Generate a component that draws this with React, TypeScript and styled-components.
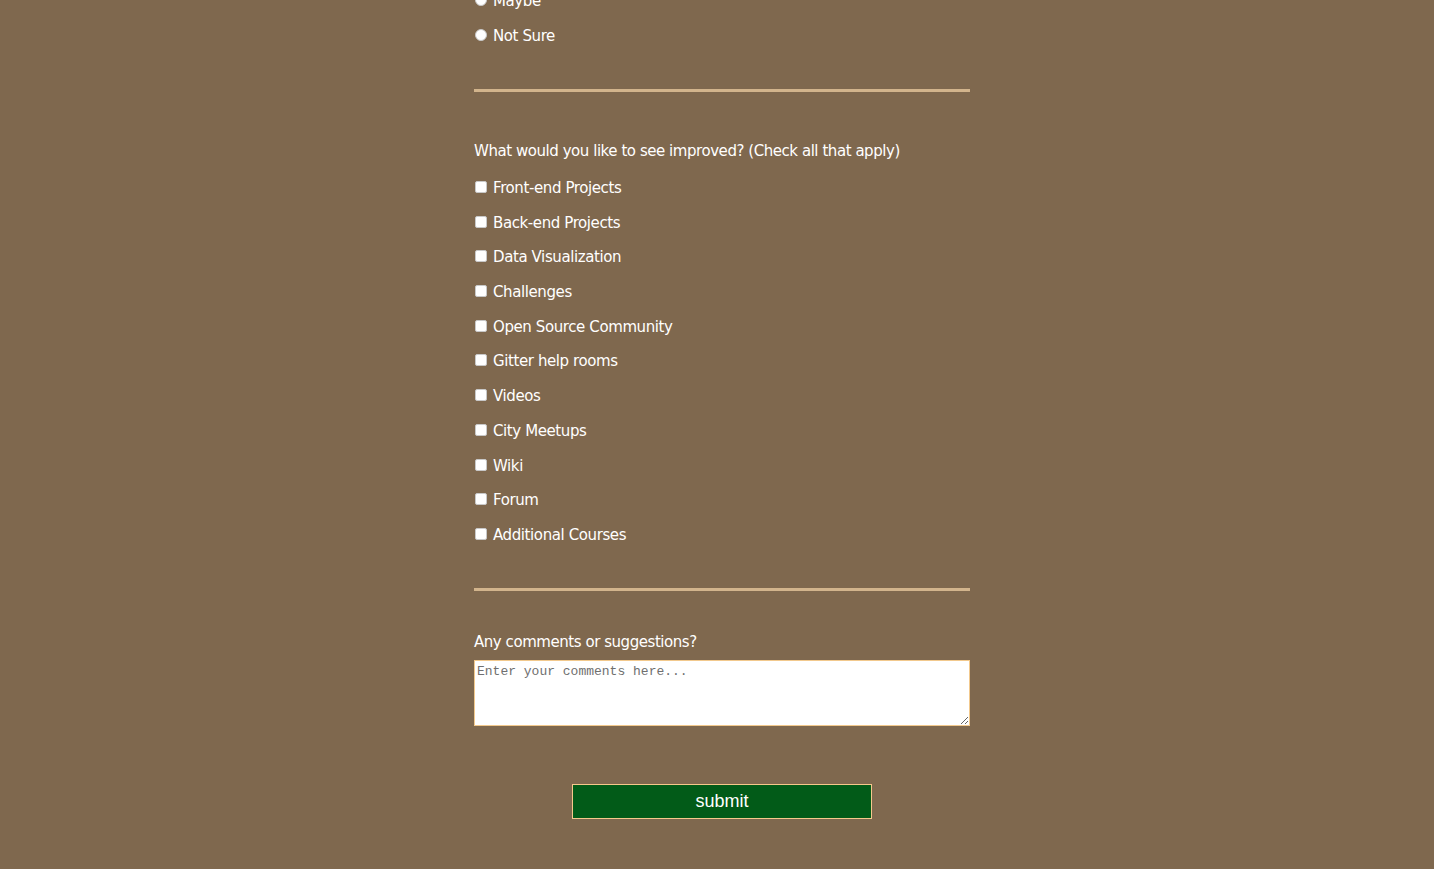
import React from "react";
import styled, { createGlobalStyle } from "styled-components";

const Global = createGlobalStyle`
  html, body { margin: 0; padding: 0; background: #7f684e; }
  body { font-family: Tahoma, "DejaVu Sans", Verdana, sans-serif; overflow: hidden; }
`;

const Page = styled.div`
  width: 506px;
  margin: -17.35px auto 0;
  padding-left: 10px;
  box-sizing: border-box;
  color: #ffffff;
  font-size: 15px;
`;

const Group = styled.div<{ $top?: number }>`
  display: flex;
  flex-direction: column;
  margin-top: ${(p) => p.$top ?? 0}px;
`;

const Option = styled.label`
  display: flex;
  align-items: center;
  height: 34.7px;
  gap: 6px;
  letter-spacing: -0.4px;
`;

const OptionText = styled.span`
  padding-top: 2px;
`;

const Radio = styled.input.attrs({ type: "radio" })`
  appearance: none;
  margin: 0 0 0 1px;
  width: 12px;
  height: 12px;
  border-radius: 50%;
  background: #fff;
  border: 1px solid #c8c8c8;
  box-sizing: border-box;
`;

const Check = styled.input.attrs({ type: "checkbox" })`
  appearance: none;
  margin: 0 0 0 1px;
  width: 12px;
  height: 12px;
  border-radius: 2px;
  background: #fff;
  border: 1px solid #c8c8c8;
  box-sizing: border-box;
`;

const Divider = styled.hr<{ $top: number }>`
  margin: ${(p) => p.$top}px 0 0;
  border: 0;
  height: 3px;
  background: #d2b48c;
`;

const Question = styled.div<{ $top: number }>`
  margin-top: ${(p) => p.$top}px;
  line-height: 20px;
  padding-top: 1px;
  letter-spacing: -0.45px;
`;

const Comments = styled.textarea`
  display: block;
  margin-top: 8px;
  width: 496px;
  height: 66px;
  box-sizing: border-box;
  border: 1px solid #f2c98d;
  background: #fff;
  padding: 3px 2px;
  font-family: "Liberation Mono", "Courier New", monospace;
  font-size: 13px;
  resize: vertical;
  outline: none;
  &::placeholder { color: #6f6f6f; }
`;

const Submit = styled.button`
  display: block;
  margin: 58px auto 0;
  width: 300px;
  height: 35px;
  background: #025b18;
  border: 1px solid #f5c98c;
  color: #fff;
  font-family: "Liberation Sans", Arial, sans-serif;
  font-size: 18px;
  padding: 0;
`;

const improvements = [
  "Front-end Projects",
  "Back-end Projects",
  "Data Visualization",
  "Challenges",
  "Open Source Community",
  "Gitter help rooms",
  "Videos",
  "City Meetups",
  "Wiki",
  "Forum",
  "Additional Courses",
];

export default function App() {
  return (
    <>
      <Global />
      <Page>
        <Group>
          <Option><Radio name="rec" /><OptionText>Maybe</OptionText></Option>
          <Option><Radio name="rec" /><OptionText>Not Sure</OptionText></Option>
        </Group>
        <Divider $top={37} />
        <Question $top={48}>What would you like to see improved? (Check all that apply)</Question>
        <Group $top={8.65}>
          {improvements.map((t) => (
            <Option key={t}><Check /><OptionText>{t}</OptionText></Option>
          ))}
        </Group>
        <Divider $top={36.65} />
        <Question $top={40}>Any comments or suggestions?</Question>
        <Comments placeholder="Enter your comments here..." />
        <Submit>submit</Submit>
      </Page>
    </>
  );
}
